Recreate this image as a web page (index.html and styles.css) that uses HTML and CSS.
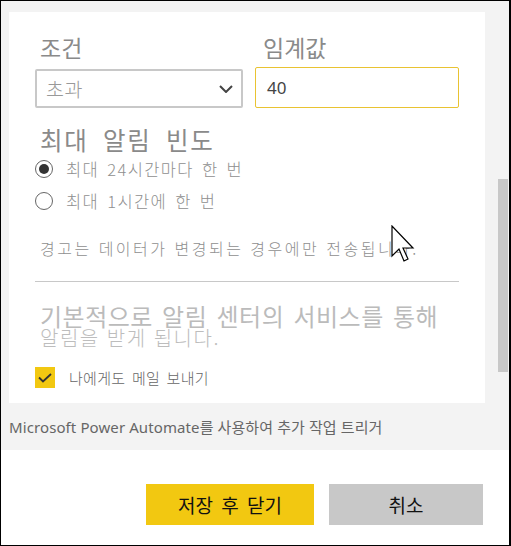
FILE: index.html
```html
<!DOCTYPE html>
<html lang="ko">
<head>
<meta charset="utf-8">
<link rel="stylesheet" href="styles.css">
</head>
<body>
<div class="frame">
  <div class="top">
    <div class="row">
      <div class="card">
        <div class="fields">
          <div class="field">
            <div class="label">조건</div>
            <div class="select">
              <span>초과</span>
              <svg class="chev" width="14" height="8" viewBox="0 0 14 8"><path d="M1 1 L7 7 L13 1" fill="none" stroke="#444" stroke-width="2"/></svg>
            </div>
          </div>
          <div class="field">
            <div class="label label2">임계값</div>
            <div class="input">40</div>
          </div>
        </div>
        <div class="heading">최대 알림 빈도</div>
        <div class="radio"><span class="dot on"></span><span>최대 24시간마다 한 번</span></div>
        <div class="radio"><span class="dot"></span><span>최대 1시간에 한 번</span></div>
        <div class="note">경고는 데이터가 변경되는 경우에만 전송됩니다.</div>
        <div class="divider"></div>
        <div class="big1">기본적으로 알림 센터의 서비스를 통해</div>
        <div class="big2">알림을 받게 됩니다.</div>
        <div class="check">
          <span class="box"><svg width="14" height="10" viewBox="0 0 14 10"><path d="M1 4.5 L5 8.5 L13 1" fill="none" stroke="#333" stroke-width="1.8"/></svg></span>
          <span>나에게도 메일 보내기</span>
        </div>
      </div>
      <div class="track"><div class="thumb"></div></div>
    </div>
    <div class="flow">Microsoft Power Automate를 사용하여 추가 작업 트리거</div>
  </div>
  <div class="bottom">
    <div class="btn primary">저장 후 닫기</div>
    <div class="btn secondary">취소</div>
  </div>
  <svg class="cursor" width="24" height="38" viewBox="0 0 24 38"><path d="M1 1 L1 31 L8 24 L13 36 L17 34 L12 23 L22 23 Z" fill="#fff" stroke="#000" stroke-width="1.2"/></svg>
</div>
</body>
</html>
```
FILE: styles.css
```css
* { box-sizing: border-box; }
html, body { margin: 0; padding: 0; background: #fff; }
body { font-family: "Noto Sans", "Noto Sans CJK KR", sans-serif; }
.frame {
  position: relative;
  width: 511px;
  height: 546px;
  border: 1px solid #000;
  border-right-width: 2px;
  display: flex;
  flex-direction: column;
  overflow: hidden;
}
.top {
  background: #f3f3f3;
  height: 449px;
  padding: 11px 0 0 8px;
}
.row { display: flex; }
.card {
  width: 476px;
  height: 391px;
  background: #fff;
  padding: 0 26px;
}
.track { width: 10px; margin-left: 13px; }
.thumb { margin-top: 167px; height: 193px; background: #c8c8c8; }
.fields { display: grid; grid-template-columns: 208px 204px; column-gap: 12px; padding-top: 20px; }
.label {
  font-family: "Noto Sans CJK KR", sans-serif;
  font-size: 23px;
  line-height: 30px;
  color: #8a8a8a;
  padding-left: 5px;
  height: 35px;
}
.label2 { padding-left: 8px; }
.select {
  height: 39px;
  margin-top: 2px;
  border: 2px solid #c8c8c8;
  border-radius: 2px;
  display: flex;
  align-items: center;
  justify-content: space-between;
  padding: 0 8px 0 9px;
  font-family: "Noto Sans CJK KR", sans-serif;
  font-size: 19.5px;
  font-weight: 300;
  letter-spacing: 0.5px;
  color: #999;
}
.chev { margin-top: 1px; }
.input {
  height: 41px;
  border: 1px solid #e9c332;
  border-radius: 2px;
  padding-left: 11px;
  display: flex;
  align-items: center;
  font-size: 17px;
  color: #444;
}
.heading {
  font-family: "Noto Sans CJK KR", sans-serif;
  font-size: 24.5px;
  line-height: 22px;
  margin-top: 21px;
  padding-bottom: 2px;
  padding-left: 5px;
  color: #8a8a8a;
  letter-spacing: 1.7px;
  word-spacing: 6px;
}
.radio {
  display: flex;
  align-items: center;
  height: 32px;
  font-family: "Noto Sans CJK KR", sans-serif;
  font-size: 16.5px;
  font-weight: 300;
  color: #8f8f8f;
  gap: 13px;
  word-spacing: 2px;
  letter-spacing: 1.4px;
}
.dot {
  width: 18px; height: 18px;
  border: 1px solid #666;
  border-radius: 50%;
  display: inline-flex;
  align-items: center;
  justify-content: center;
  flex: none;
}
.dot.on::after {
  content: "";
  width: 10px; height: 10px;
  border-radius: 50%;
  background: #333;
}
.note {
  margin-top: 19px;
  padding-left: 5px;
  font-family: "Noto Sans CJK KR", sans-serif;
  font-size: 16px;
  font-weight: 300;
  line-height: 24px;
  color: #8f8f8f;
  letter-spacing: 2.5px;
  white-space: nowrap;
}
.divider { height: 1px; background: #c8c8c8; margin-top: 21px; }
.big1 {
  margin-top: 22px;
  padding-left: 5px;
  font-family: "Noto Sans CJK KR", sans-serif;
  font-size: 24px;
  line-height: 24px;
  color: #bbb;
  word-spacing: 2px;
  letter-spacing: 0.5px;
  white-space: nowrap;
}
.big2 {
  padding-left: 5px;
  font-family: "Noto Sans CJK KR", sans-serif;
  font-size: 20px;
  font-weight: 300;
  line-height: 20px;
  color: #bdbdbd;
  letter-spacing: 1.5px;
}
.check {
  display: flex;
  align-items: center;
  gap: 14px;
  margin-top: 19px;
  font-family: "Noto Sans CJK KR", sans-serif;
  font-size: 15px;
  font-weight: 300;
  color: #666;
  word-spacing: 2px;
  letter-spacing: 0.3px;
}
.box {
  width: 20px; height: 21px;
  background: #f2c811;
  display: inline-flex;
  align-items: center;
  justify-content: center;
}
.flow {
  margin-top: 14px;
  font-size: 15px;
  line-height: 20px;
  color: #666;
  letter-spacing: 0.1px;
  white-space: nowrap;
}
.bottom {
  flex: 1;
  background: #fff;
  display: flex;
  justify-content: flex-end;
  align-items: flex-start;
  gap: 15px;
  padding: 34px 26px 0 0;
}
.btn {
  height: 41px;
  display: flex;
  align-items: center;
  justify-content: center;
  font-family: "Noto Sans CJK KR", sans-serif;
  font-size: 19px;
  color: #111;
}
.primary { width: 168px; background: #f2c811; word-spacing: 3px; }
.secondary { width: 154px; background: #c8c8c8; }
.cursor { position: absolute; left: 390px; top: 224px; }
```
